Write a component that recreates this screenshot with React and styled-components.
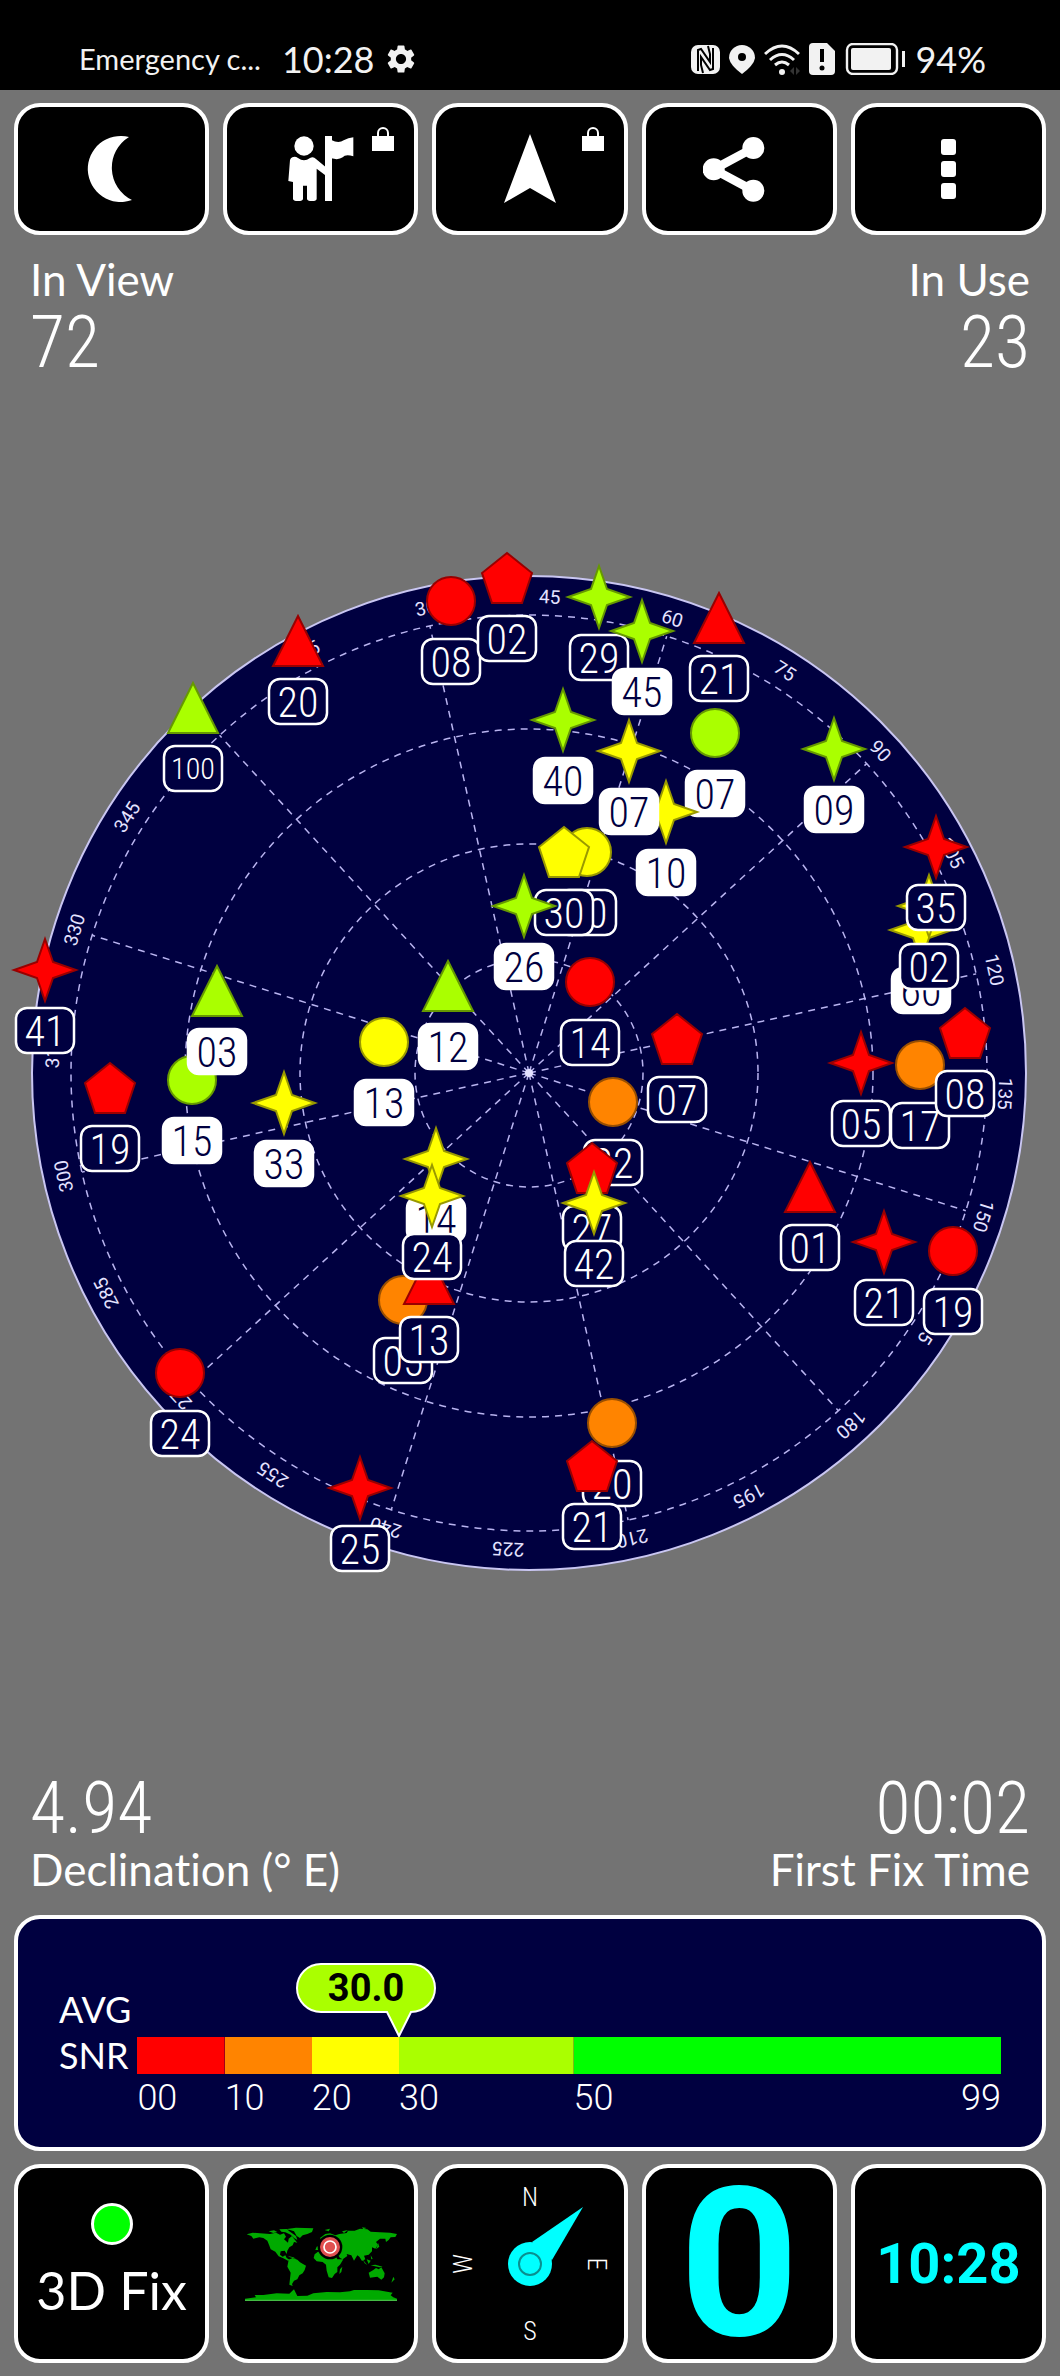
import React from 'react';
import styled, { createGlobalStyle } from 'styled-components';
import { MdSettings } from 'react-icons/md';

const textFont = "Lato, 'Open Sans', sans-serif";
const digitFont = "'Roboto Condensed', 'Liberation Sans Narrow', Roboto, sans-serif";
const navy = '#000040';
const snr = {
  red: '#ff0000',
  orange: '#ff8400',
  yellow: '#ffff00',
  lime: '#aaff00',
  green: '#00ff00',
};

const GlobalStyle = createGlobalStyle`
  *, *::before, *::after {
    box-sizing: border-box;
  }
  body {
    margin: 0;
    background: #737373;
    color: #fff;
    font-family: ${textFont};
    font-variant-ligatures: none;
  }
  button {
    font: inherit;
    color: inherit;
    cursor: pointer;
  }
`;

const Page = styled.div`
  display: flex;
  flex-direction: column;
  min-height: 100vh;
`;

const StatusBar = styled.header`
  display: flex;
  justify-content: space-between;
  align-items: center;
  height: 90px;
  padding: 28px 74px 0 79px;
  background: #000;
  color: #f2f2f2;
`;

const StatusGroup = styled.div`
  display: flex;
  align-items: center;
  gap: 9px;
  svg {
    display: block;
    flex: none;
  }
`;

const Carrier = styled.span`
  margin-right: 12px;
  font-size: 29px;
  line-height: 40px;
`;

const StatusValue = styled.span`
  font-size: 36px;
  line-height: 40px;
`;

const Row = styled.nav`
  display: grid;
  grid-template-columns: repeat(5, 1fr);
  gap: 14px;
  padding: 0 14px;
`;

const Tile = styled.button`
  position: relative;
  display: flex;
  flex-direction: column;
  align-items: center;
  justify-content: center;
  height: ${({ $tall }) => ($tall ? '199px' : '132px')};
  padding: 0;
  background: #000;
  border: 4px solid #fff;
  border-radius: 26px;
  svg {
    display: block;
  }
`;

const LockMark = styled.span`
  position: absolute;
  top: 20px;
  right: 20px;
`;

const Readouts = styled.section`
  display: flex;
  justify-content: space-between;
  padding: 0 30px;
`;

const Readout = styled.div`
  display: flex;
  flex-direction: ${({ $flip }) => ($flip ? 'column-reverse' : 'column')};
  gap: ${({ $flip }) => ($flip ? 0 : 4)}px;
  text-align: ${({ $end }) => ($end ? 'right' : 'left')};
`;

const ReadoutLabel = styled.span`
  font-size: 44px;
  line-height: 48px;
`;

const ReadoutValue = styled.span`
  font-family: ${digitFont};
  font-size: 72px;
  font-weight: 350;
  line-height: 72px;
`;

const Sky = styled.main`
  display: flex;
  flex: 1;
  align-items: center;
  padding-bottom: 6px;
  svg {
    display: block;
    width: 100%;
    overflow: visible;
  }
`;

const RingLine = styled.circle`
  fill: none;
  stroke: #b9b4f0;
  stroke-width: 1.5;
  stroke-dasharray: 7 6;
`;

const Spoke = styled.line`
  stroke: #b9b4f0;
  stroke-width: 1.5;
  stroke-dasharray: 7 6;
`;

const Bearing = styled.text`
  fill: #e4e2ff;
  font-family: Roboto, sans-serif;
  font-size: 19px;
  text-anchor: middle;
`;

const BadgeBox = styled.rect`
  fill: ${({ $used }) => ($used ? '#fff' : navy)};
  stroke: #fff;
  stroke-width: 2.5;
`;

const BadgeText = styled.text`
  fill: ${({ $used }) => ($used ? navy : '#fff')};
  font-family: ${digitFont};
  font-size: ${({ $small }) => ($small ? 30 : 42)}px;
  font-weight: 350;
  text-anchor: middle;
`;

const Panel = styled.section`
  display: flex;
  align-items: flex-start;
  gap: 6px;
  height: 236px;
  margin: 22px 14px 13px;
  padding: 67px 41px 0;
  background: ${navy};
  border: 4px solid #fff;
  border-radius: 26px;
`;

const PanelLabel = styled.div`
  font-size: 36px;
  line-height: 46px;
`;

const Scale = styled.div`
  position: relative;
  display: flex;
  flex: 1;
  margin-top: 51px;
`;

const Segment = styled.div`
  flex: ${({ $span }) => $span} 0 0;
  display: flex;
  justify-content: space-between;
  padding-top: 37px;
  background: linear-gradient(${({ $color }) => $color}, ${({ $color }) => $color}) top / 100% 37px no-repeat;
  font-family: Roboto, sans-serif;
  font-size: 36px;
  line-height: 48px;
  font-weight: 350;
`;

const Bubble = styled.div`
  position: absolute;
  top: -74px;
  width: 140px;
  height: 74px;
  margin-left: -103px;
  color: #000;
  font-family: Roboto, sans-serif;
  font-size: 38px;
  font-weight: 700;
  line-height: 50px;
  text-align: center;
  svg {
    position: absolute;
    inset: 0;
  }
  span {
    position: relative;
  }
`;

const Dot = styled.span`
  width: 42px;
  height: 42px;
  margin-bottom: 10px;
  background: ${snr.green};
  border: 3px solid #fff;
  border-radius: 50%;
`;

const FixText = styled.span`
  font-size: 52px;
  line-height: 70px;
`;

const Speed = styled.span`
  color: #0ff;
  font-family: Roboto, sans-serif;
  font-size: 208px;
  font-weight: 700;
  line-height: 190px;
`;

const Clock = styled.span`
  color: #0ff;
  font-family: Roboto, sans-serif;
  font-size: 56px;
  font-weight: 700;
`;

const Cardinal = styled.text`
  fill: #fff;
  font-family: ${digitFont};
  font-size: 26px;
  font-weight: 350;
  text-anchor: middle;
`;

// [shape, colour, x, y, id, used in fix], drawn in this order
const satellites = [
  ['circle', 'red', 451, 58, '08', false],
  ['pentagon', 'red', 507, 35, '02', false],
  ['triangle', 'red', 298, 98, '20', false],
  ['triangle', 'lime', 193, 165, '100', false],
  ['star', 'red', 45, 427, '41', false],
  ['circle', 'lime', 192, 537, '15', true],
  ['triangle', 'lime', 217, 448, '03', true],
  ['circle', 'yellow', 384, 499, '13', true],
  ['triangle', 'lime', 448, 443, '12', true],
  ['star', 'lime', 599, 54, '29', false],
  ['star', 'lime', 642, 88, '45', true],
  ['triangle', 'red', 719, 75, '21', false],
  ['star', 'lime', 563, 177, '40', true],
  ['circle', 'lime', 715, 190, '07', true],
  ['star', 'yellow', 666, 269, '10', true],
  ['circle', 'yellow', 587, 309, '30', false],
  ['star', 'yellow', 629, 208, '07', true],
  ['pentagon', 'yellow', 564, 309, '30', false],
  ['star', 'lime', 524, 363, '26', true],
  ['star', 'lime', 834, 206, '09', true],
  ['star', 'yellow', 921, 387, '60', true],
  ['star', 'yellow', 929, 363, '02', false],
  ['star', 'red', 936, 304, '35', false],
  ['circle', 'red', 590, 439, '14', false],
  ['pentagon', 'red', 677, 496, '07', false],
  ['star', 'red', 861, 520, '05', false],
  ['circle', 'orange', 920, 522, '17', false],
  ['pentagon', 'red', 965, 490, '08', false],
  ['circle', 'orange', 613, 559, '22', false],
  ['pentagon', 'red', 592, 625, '27', false],
  ['star', 'yellow', 594, 660, '42', false],
  ['triangle', 'red', 810, 644, '01', false],
  ['star', 'red', 884, 699, '21', false],
  ['circle', 'red', 953, 708, '19', false],
  ['circle', 'orange', 612, 880, '20', false],
  ['pentagon', 'red', 592, 923, '21', false],
  ['pentagon', 'red', 110, 545, '19', false],
  ['star', 'yellow', 284, 560, '33', true],
  ['star', 'yellow', 436, 616, '14', true],
  ['circle', 'orange', 403, 757, '05', false],
  ['triangle', 'red', 429, 736, '13', false],
  ['star', 'yellow', 432, 653, '24', false],
  ['circle', 'red', 180, 830, '24', false],
  ['star', 'red', 360, 945, '25', false],
];

const outlines = {
  triangle: 'M0 -25L25 25H-25Z',
  pentagon: 'M0 -25L25 -5L15 25H-15L-25 -5Z',
  star: 'M0 -31L8 -8L31 0L8 8L0 31L-8 8L-31 0L-8 -8Z',
};

const Marker = ({ shape, color }) => {
  const paint = { fill: snr[color], stroke: `color-mix(in srgb, ${snr[color]} 60%, #000)`, strokeWidth: 2 };
  return shape === 'circle' ? <circle r="24" {...paint} /> : <path d={outlines[shape]} {...paint} />;
};

const Satellite = ({ shape, color, x, y, id, used }) => (
  <g transform={`translate(${x} ${y})`}>
    <Marker shape={shape} color={color} />
    <BadgeBox x="-29" y="38" width="58" height="45" rx="11" $used={used} />
    <BadgeText y={id.length > 2 ? 71 : 76} $used={used} $small={id.length > 2}>
      {id}
    </BadgeText>
  </g>
);

const heading = -42.5;

const SkyPlot = () => (
  <svg viewBox="0 0 1060 1060" role="img" aria-label="Satellites in view">
    <g transform="translate(529 530)">
      <circle r="497" fill={navy} stroke="#c9c6f2" strokeWidth="2" />
      {[114, 229, 344, 458].map((r) => (
        <RingLine key={r} r={r} />
      ))}
      {Array.from({ length: 12 }, (_, i) => (
        <Spoke key={i} y2="-458" transform={`rotate(${i * 30 + heading})`} />
      ))}
      {Array.from({ length: 24 }, (_, i) => (
        <Bearing key={i} y="-470" transform={`rotate(${i * 15 + heading})`}>
          {i * 15}
        </Bearing>
      ))}
      <circle r="4" fill="#e4e2ff" />
    </g>
    {satellites.map(([shape, color, x, y, id, used]) => (
      <Satellite key={`${x}-${y}`} shape={shape} color={color} x={x} y={y} id={id} used={used} />
    ))}
  </svg>
);

const Lock = () => (
  <LockMark>
    <svg width="22" height="24" viewBox="0 0 22 24">
      <path d="M6 10V6a5 5 0 0 1 10 0v4" fill="none" stroke="#fff" strokeWidth="2" />
      <path d="M0 9h22v15H0z" fill="#fff" />
    </svg>
  </LockMark>
);

const NfcIcon = () => (
  <svg width="29" height="29" viewBox="0 0 29 29">
    <rect width="29" height="29" rx="7" fill="#f2f2f2" />
    <path d="M7 26V5L10 4L19 17V9L17 1M22 3V24L19 25L10 12V20L12 28" fill="none" stroke="#000" strokeWidth="2" />
  </svg>
);

const PinIcon = () => (
  <svg width="26" height="29" viewBox="0 0 26 29">
    <path d="M13 0A13 13 0 0 1 26 13Q25 20 13 29Q1 20 0 13A13 13 0 0 1 13 0z" fill="#f2f2f2" />
    <circle cx="13" cy="12" r="4" fill="#000" />
  </svg>
);

const WifiIcon = () => (
  <svg width="36" height="31" viewBox="0 0 36 31" fill="none" stroke="#f2f2f2" strokeWidth="3">
    <path d="M1 10Q18 -6 35 10M6 16Q18 5 30 16M11 21Q18 15 25 21" />
    <circle cx="18" cy="28" r="3" fill="#f2f2f2" stroke="none" />
    <path d="M30 23l-4 4l4 4zM32 23l4 4l-4 4z" fill="#333" stroke="none" />
  </svg>
);

const SimIcon = () => (
  <svg width="26" height="32" viewBox="0 0 26 32">
    <path d="M4 0H18L26 8V28a4 4 0 0 1-4 4H4a4 4 0 0 1-4-4V4a4 4 0 0 1 4-4z" fill="#f2f2f2" />
    <path d="M13 6v13" stroke="#000" strokeWidth="4" />
    <circle cx="13" cy="25" r="2.5" fill="#000" />
  </svg>
);

const BatteryIcon = () => (
  <svg width="62" height="32" viewBox="-2 0 62 32">
    <rect x="1" y="1" width="50" height="30" rx="6" fill="none" stroke="#f2f2f2" strokeWidth="2.4" />
    <rect x="5" y="5" width="40" height="22" rx="2" fill="#f2f2f2" />
    <path d="M57.5 8v16" stroke="#f2f2f2" strokeWidth="3" />
  </svg>
);

const MoonIcon = () => (
  <svg width="72" height="72" viewBox="0 0 72 72" fill="#fff">
    <path d="M53 4A33 33 0 1 0 56 67A36 36 0 0 1 53 4z" />
  </svg>
);

const GuideIcon = () => (
  <svg width="72" height="72" viewBox="675 339 216 216" fill="#fff">
    <circle cx="732" cy="378" r="29" />
    <path d="M697 412Q705 408 714 414Q732 428 750 414Q760 408 768 417L796 440V466L770 446V536Q770 543 756 543Q741 543 741 536V497H729V536Q729 543 714 543Q699 543 699 536V486L685 483L690 420Q692 414 697 412z" />
    <path d="M795 348H816V543H795z" />
    <path d="M814 360Q836 372 851 361Q865 354 880 352V409Q856 402 848 412Q836 421 814 415z" />
  </svg>
);

const ArrowIcon = () => (
  <svg width="72" height="72" viewBox="0 0 72 72" fill="#fff">
    <path d="M36 1L62 70L36 55L10 70z" />
  </svg>
);

const ShareIcon = () => (
  <svg width="72" height="72" viewBox="130 339 216 216" fill="#fff">
    <path d="M281 384L162 448L281 512" fill="none" stroke="#fff" strokeWidth="26" />
    <circle cx="281" cy="384" r="33" />
    <circle cx="162" cy="448" r="33" />
    <circle cx="281" cy="512" r="33" />
  </svg>
);

const MoreIcon = () => (
  <svg width="72" height="72" viewBox="0 0 72 72" fill="#fff">
    <rect x="29" y="6" width="15" height="16" rx="3" />
    <rect x="29" y="28" width="15" height="16" rx="3" />
    <rect x="29" y="50" width="15" height="16" rx="3" />
  </svg>
);

const WorldMap = () => (
  <svg width="152" height="76" viewBox="75 200 456 228" fill="#00aa00">
    <path d="M80 225L98 220L120 222L150 224L168 220L180 226L192 222L198 232L192 240L204 250L206 238L216 230L222 238L232 250L222 248L218 258L208 264L202 274L200 284L194 274L182 276L180 286L188 292L196 288L200 296L210 302L204 304L190 297L176 291L166 277L152 270L147 256L142 244L130 236L118 234L100 238L94 230z" />
    <path d="M146 216L162 213L172 218L160 221zM178 210L200 209L208 216L228 230L232 242L222 236L212 226L196 219L184 217z" />
    <path d="M196 210L228 205L280 207L276 218L262 224L248 228L240 236L230 230L222 216L210 212z" />
    <path d="M206 301L218 296L232 301L240 309L258 319L254 332L248 342L238 348L232 360L222 364L216 374L218 380L208 376L210 358L212 340L202 322z" />
    <path d="M284 285L294 277L312 278L322 284L344 284L352 300L370 300L360 316L352 324L352 338L344 344L336 356L326 354L320 334L318 316L308 308L290 306L281 296zM360 330L367 322L364 338L358 344z" />
    <path d="M286 272L290 262L300 258L306 246L300 236L316 224L330 222L346 228L358 224L380 221L384 214L404 214L420 208L442 210L452 217L480 219L510 220L531 224L526 233L512 234L506 242L498 248L496 238L480 238L468 248L474 256L466 268L456 264L456 276L446 286L432 289L436 300L426 305L418 292L412 288L402 304L394 288L380 284L382 290L368 300L360 296L348 278L334 276L318 270L300 272z" />
    <path d="M474 250L478 262L468 270L472 260zM424 292L434 308L442 317L434 312zM440 300L452 304L446 314zM452 318L466 316L488 322L478 324zM452 288L458 298L454 300z" />
    <path d="M446 340L460 332L468 326L476 330L484 324L494 342L492 354L484 361L472 352L450 355zM520 352L524 360L514 370zM204 290L220 294L228 298L210 294zM314 212L330 208L326 216zM366 216L384 212L372 221zM426 204L440 206L430 210z" />
    <path d="M75 418L108 414L104 407L130 407L170 402L208 403L222 390L226 398L232 410L262 409L280 402L320 398L360 399L390 396L402 392L440 392L476 393L518 400L512 408L520 414L531 418V424H75z" />
    <path d="M75 421H531V425H75z" fill="#44bb44" />
    <circle cx="330" cy="263" r="37" fill="#000" />
    <circle cx="330" cy="263" r="30" fill="#e05050" />
    <circle cx="330" cy="263" r="18" fill="none" stroke="#fff" strokeWidth="5" />
  </svg>
);

const Compass = () => (
  <svg width="184" height="184" viewBox="-92 -92 184 184" role="img" aria-label="Compass">
    <Cardinal y="-58">N</Cardinal>
    <Cardinal y="-58" transform="rotate(90)">E</Cardinal>
    <Cardinal y="76">S</Cardinal>
    <Cardinal y="-58" transform="rotate(-90)">W</Cardinal>
    <path d="M2 -22L53 -57L22 -4z" fill="#0ff" />
    <circle r="22" fill="#0ff" />
    <circle r="11" fill="none" stroke="#0a8f8f" strokeWidth="2" />
  </svg>
);

const segments = [
  { from: '00', span: 10, color: snr.red },
  { from: '10', span: 10, color: snr.orange },
  { from: '20', span: 10, color: snr.yellow },
  { from: '30', span: 20, color: snr.lime },
  { from: '50', to: '99', span: 49, color: snr.green },
];

const SnrPanel = ({ average }) => (
  <Panel>
    <PanelLabel>
      AVG
      <br />
      SNR
    </PanelLabel>
    <Scale>
      {segments.map(({ from, to, span, color }) => (
        <Segment key={from} $span={span} $color={color}>
          <span>{from}</span>
          {to && <span>{to}</span>}
        </Segment>
      ))}
      <Bubble style={{ left: `${(average / 99) * 100}%` }}>
        <svg width="140" height="74" viewBox="0 0 140 74">
          <path
            d="M25 1H115A24 24 0 0 1 115 49L103 73L91 49H25A24 24 0 0 1 25 1z"
            fill={snr.lime}
            stroke="#fff"
            strokeWidth="2"
          />
        </svg>
        <span>{average.toFixed(1)}</span>
      </Bubble>
    </Scale>
  </Panel>
);

const Stat = ({ label, value, end, flip }) => (
  <Readout $end={end} $flip={flip}>
    <ReadoutLabel>{label}</ReadoutLabel>
    <ReadoutValue>{value}</ReadoutValue>
  </Readout>
);

const Toolbar = styled(Row)`
  padding-top: 13px;
  padding-bottom: 20px;
`;

const Footer = styled(Row)`
  padding-bottom: 13px;
`;

const App = () => (
  <>
    <GlobalStyle />
    <Page>
      <StatusBar>
        <StatusGroup>
          <Carrier>Emergency c...</Carrier>
          <StatusValue>10:28</StatusValue>
          <MdSettings size={34} />
        </StatusGroup>
        <StatusGroup>
          <NfcIcon />
          <PinIcon />
          <WifiIcon />
          <SimIcon />
          <BatteryIcon />
          <StatusValue>94%</StatusValue>
        </StatusGroup>
      </StatusBar>
      <Toolbar>
        <Tile aria-label="Night mode">
          <MoonIcon />
        </Tile>
        <Tile aria-label="Guide">
          <GuideIcon />
          <Lock />
        </Tile>
        <Tile aria-label="Navigate">
          <ArrowIcon />
          <Lock />
        </Tile>
        <Tile aria-label="Share">
          <ShareIcon />
        </Tile>
        <Tile aria-label="More">
          <MoreIcon />
        </Tile>
      </Toolbar>
      <Readouts>
        <Stat label="In View" value="72" />
        <Stat label="In Use" value="23" end />
      </Readouts>
      <Sky>
        <SkyPlot />
      </Sky>
      <Readouts>
        <Stat label="Declination (° E)" value="4.94" flip />
        <Stat label="First Fix Time" value="00:02" flip end />
      </Readouts>
      <SnrPanel average={30} />
      <Footer>
        <Tile $tall>
          <Dot />
          <FixText>3D Fix</FixText>
        </Tile>
        <Tile $tall aria-label="World map">
          <WorldMap />
        </Tile>
        <Tile $tall>
          <Compass />
        </Tile>
        <Tile $tall>
          <Speed>0</Speed>
        </Tile>
        <Tile $tall>
          <Clock>10:28</Clock>
        </Tile>
      </Footer>
    </Page>
  </>
);

export default App;
